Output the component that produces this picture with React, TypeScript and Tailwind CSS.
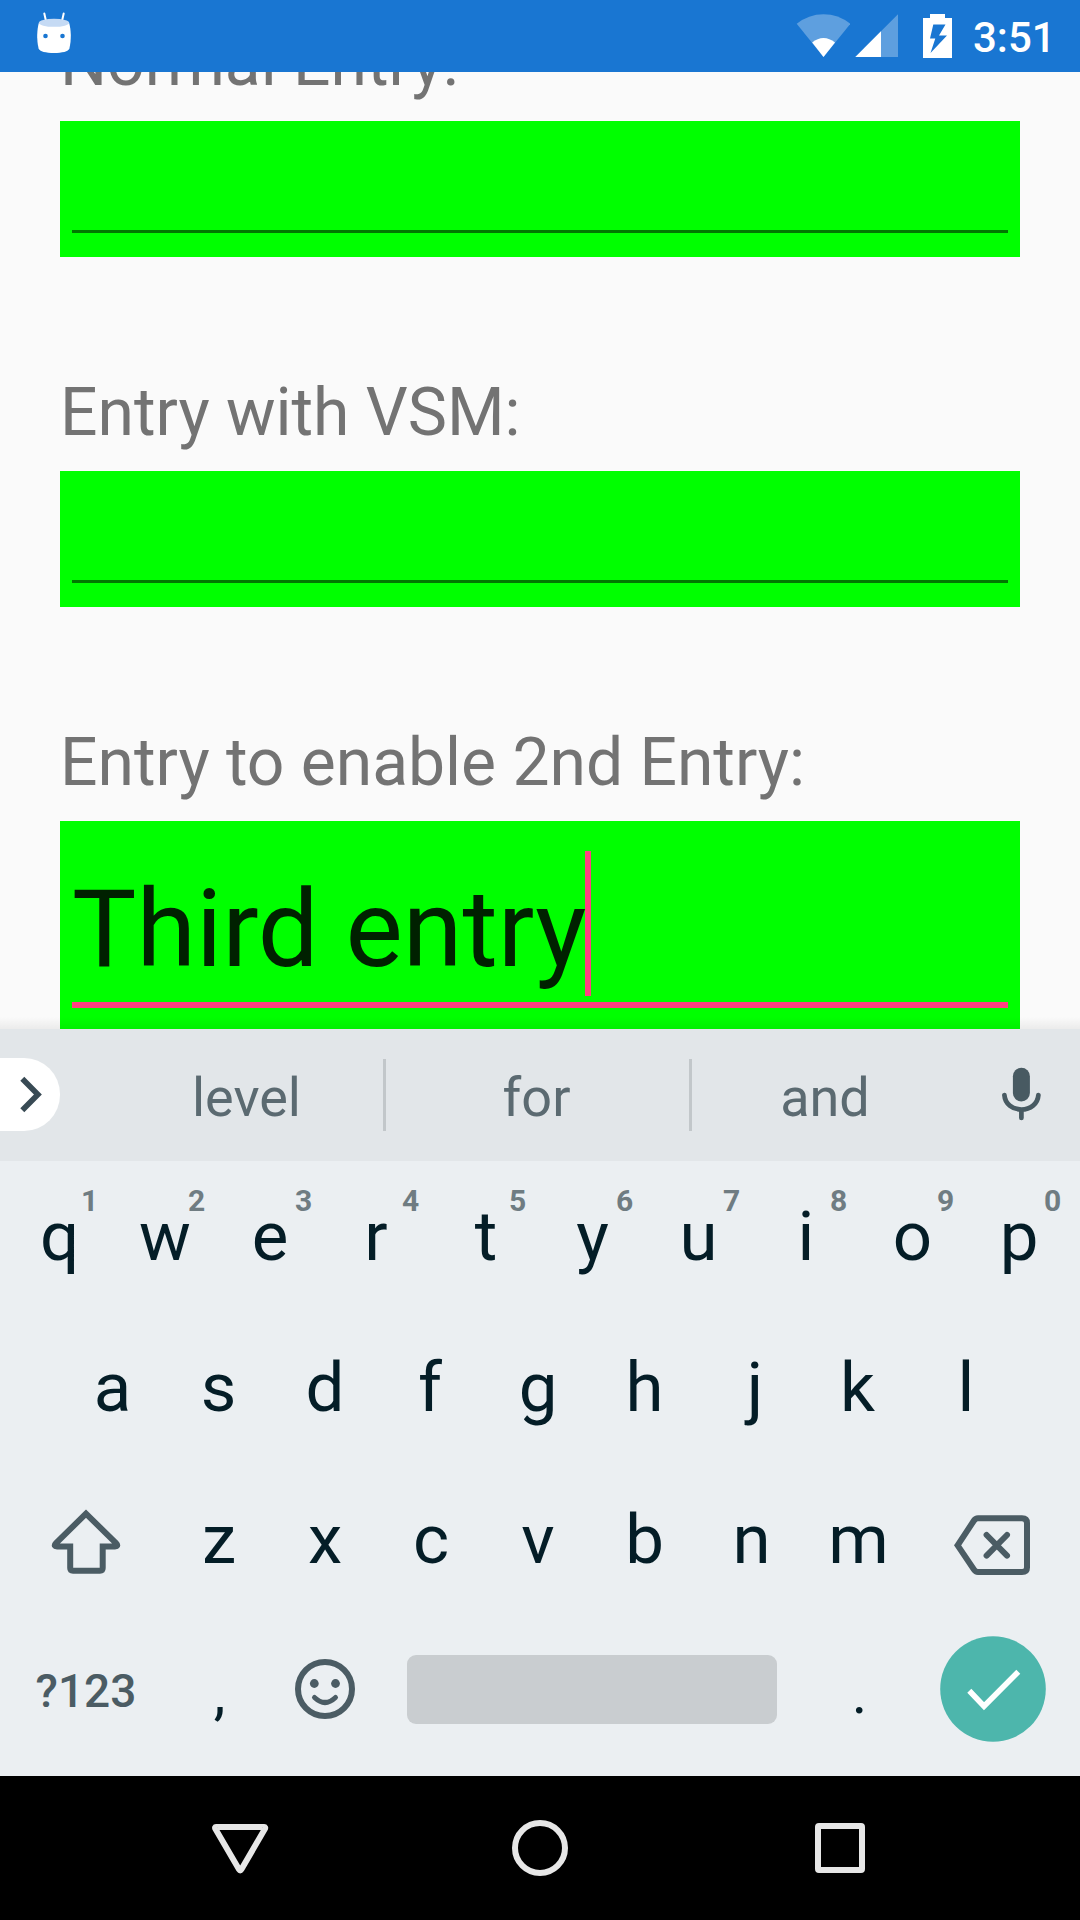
import React from "react";

const topRow = ["q", "w", "e", "r", "t", "y", "u", "i", "o", "p"];
const middleRow = ["a", "s", "d", "f", "g", "h", "j", "k", "l"];
const bottomRow = ["z", "x", "c", "v", "b", "n", "m"];

const opticalShift: Record<string, string> = {
  q: "pl-[2px]",
  w: "pr-[1px]",
  e: "pr-[5px]",
  r: "pr-[7px]",
  t: "pr-[1px]",
  y: "pr-[2px]",
  u: "pr-[4px]",
  i: "pr-[3px]",
  o: "pr-[4px]",
  p: "pr-[5px]",
  a: "pl-[1px]",
  s: "pr-[1px]",
  d: "pr-[2px]",
  f: "pr-[6px]",
  g: "pr-[4px]",
  h: "pr-[5px]",
  j: "pl-[2px]",
  k: "pr-[7px]",
  l: "pr-[4px]",
  z: "pr-[1px]",
  x: "pr-[3px]",
  c: "pr-[5px]",
  v: "pr-[5px]",
  b: "pr-[6px]",
  n: "pr-[6px]",
  m: "pr-[6px]",
};

function StatusBar() {
  return (
    <header className="relative z-10 flex h-[72px] shrink-0 items-start bg-[#1976d2] text-white">
      <svg className="ml-[36px] mt-[12px]" width="36" height="42" viewBox="36 12 36 42">
        <path d="M44.3 13.5 46 21M63.7 13.5 62 21" stroke="#fff" strokeWidth="2" strokeLinecap="round" />
        <path d="M38.8 23C37 30 36.400 39 38.600 48.500C39.500 51.500 46 53 54 53C62 53 68.500 51.500 69.400 48.500C71.600 39 71 30 69.200 23Z" fill="#fff" />
        <ellipse cx="54" cy="22.800" rx="15.200" ry="4" fill="#c5daf4" />
        <circle cx="45.500" cy="36" r="2.300" fill="#1976d2" />
        <circle cx="62.500" cy="36" r="2.300" fill="#1976d2" />
      </svg>
      <svg className="ml-[724px] mt-[13px]" width="54" height="45" viewBox="796 13 54 45">
        <path d="M823.500 57 796.700 23.800Q808.500 14.200 823.500 14.200Q838.500 14.200 850.300 23.800Z" fill="#fff" fillOpacity=".3" />
        <path d="M823.500 57 812.200 42.500Q817.500 38 823.500 38Q829.500 38 835 42.500Z" fill="#fff" />
      </svg>
      <svg className="ml-[5px] mt-[13px]" width="44" height="45" viewBox="855 13 44 45">
        <path d="M855.300 57 898 14.300V57Z" fill="#fff" fillOpacity=".3" />
        <path d="M855.300 57 881 31.300V57Z" fill="#fff" />
      </svg>
      <svg className="ml-[24px] mt-[13px]" width="29" height="46" viewBox="923 13 29 46">
        <path d="M930 14h15v4h7v40h-29V18h7zM933.300 24.500 930 38.500h5.300L930.500 53 947 35.500h-8L945.500 24.500z" fill="#fff" fillRule="evenodd" />
      </svg>
      <span className="ml-[21px] mt-[13px] text-[42px] font-medium leading-[49px]">3:51</span>
    </header>
  );
}

function Field({ label, children }: { label: string; children?: React.ReactNode }) {
  return (
    <section className="mb-[117px]">
      <div className="mb-[20px] whitespace-nowrap text-[66px] leading-[77px] tracking-[-0.03px] text-[#737373]">{label}</div>
      {children ?? (
        <div className="flex h-[136px] flex-col justify-end bg-[#00ff00] px-[12px] pb-[24px]">
          <div className="h-[3px] bg-[#007800]" />
        </div>
      )}
    </section>
  );
}

function Key({ letter, hint }: { letter: string; hint?: string }) {
  return (
    <div className="relative flex h-full w-[107px] items-center justify-center text-[69px] leading-[81px] text-[#041d27]">
      <span className={opticalShift[letter]}>{letter}</span>
      {hint && (
        <span className="absolute left-[72px] top-[25px] w-[25px] text-center text-[30px] font-bold leading-[30px] text-[#6f7c82]">
          {hint}
        </span>
      )}
    </div>
  );
}

function PunctuationKey({ mark }: { mark: string }) {
  return (
    <div className="w-[107px] pt-[7px] text-center text-[59px] leading-[69px] text-[#041d27]">{mark}</div>
  );
}

function Suggestions() {
  return (
    <div className="flex h-[132px] items-center bg-[#e2e6e9] text-[54px] leading-[64px] text-[#5b6a71]">
      <div className="mb-[1px] h-[73px] w-[60px] rounded-r-[36px] bg-white">
        <svg width="60" height="73" viewBox="0 0 60 73" fill="none">
          <path d="m22.300 20.800 15.600 15.700-15.600 15.700" stroke="#384a54" strokeWidth="5.600" />
        </svg>
      </div>
      <div className="ml-[50px] w-[273px] pt-[6px] text-center">level</div>
      <div className="h-[72px] w-[3px] bg-[#c2c7ca]" />
      <div className="w-[303px] pr-[2px] pt-[6px] text-center">for</div>
      <div className="h-[72px] w-[3px] bg-[#c2c7ca]" />
      <div className="w-[266px] pt-[6px] text-center">and</div>
      <svg className="ml-[43px]" width="42" height="56" viewBox="1001 1067 42 56" fill="none">
        <rect x="1012.900" y="1067.700" width="17" height="33.700" rx="8.500" fill="#485a62" />
        <path d="M1004.400 1095C1005 1104 1012.500 1109.500 1021.400 1109.500C1030.300 1109.500 1037.800 1104 1038.400 1095M1021.400 1110V1118" stroke="#485a62" strokeWidth="4.700" strokeLinecap="round" />
      </svg>
    </div>
  );
}

function Keyboard() {
  return (
    <div className="relative h-[747px] shrink-0 bg-[#ebeff2]">
      <div className="absolute -top-[12px] left-0 h-[12px] w-full bg-gradient-to-t from-black/6 to-transparent" />
      <Suggestions />
      <div className="flex h-[151px] justify-center">
        {topRow.map((k, i) => (
          <Key key={k} letter={k} hint={String((i + 1) % 10)} />
        ))}
      </div>
      <div className="flex h-[151px] justify-center">
        {middleRow.map((k) => (
          <Key key={k} letter={k} />
        ))}
      </div>
      <div className="flex h-[152px] items-center">
        <svg className="ml-[50px] mr-[44px] mt-[4px]" width="72" height="68" viewBox="50 1507 72 68" fill="none">
          <path d="M86 1513.600 56 1543.200C53.800 1545.400 54.800 1546.400 57 1546.400H70.200V1568Q70.200 1570.700 73 1570.700H100Q102.700 1570.700 102.700 1568V1546.400H115C117.200 1546.400 118.200 1545.400 116 1543.200Z" stroke="#4b5c64" strokeWidth="6" />
        </svg>
        {bottomRow.map((k) => (
          <Key key={k} letter={k} />
        ))}
        <svg className="ml-[37px] mt-[12px]" width="80" height="64" viewBox="952 1513 80 64" fill="none">
          <path d="M957.600 1545.300 974 1520.500Q975.500 1518.200 978 1518.200H1022Q1027 1518.200 1027 1523V1567.500Q1027 1572 1022 1572H978Q975.500 1572 974 1569.700Z" stroke="#4b5c64" strokeWidth="6" />
          <path d="m986.600 1535 20.400 20.600m0-20.600-20.400 20.600" stroke="#4b5c64" strokeWidth="6" strokeLinecap="round" />
        </svg>
      </div>
      <div className="flex h-[148px] items-center">
        <span className="w-[166px] pl-[6px] pt-[3px] text-center text-[46px] font-medium leading-[54px] text-[#4b5c64]">?123</span>
        <PunctuationKey mark="," />
        <svg className="ml-[22px]" width="60" height="60" viewBox="0 0 60 60" fill="none">
          <circle cx="30" cy="30" r="27" stroke="#4b5c64" strokeWidth="6" />
          <circle cx="19.300" cy="24.500" r="4.400" fill="#4b5c64" />
          <circle cx="40.500" cy="24.500" r="4.400" fill="#4b5c64" />
          <path d="M19.500 38.500Q30 48.500 40.500 38.500" stroke="#4b5c64" strokeWidth="5" strokeLinecap="round" />
        </svg>
        <div className="ml-[52px] mt-[1px] h-[69px] w-[370px] rounded-[9px] bg-[#c9cdd0]" />
        <div className="ml-[29px]">
          <PunctuationKey mark="." />
        </div>
        <svg className="ml-[27px]" width="106" height="106" viewBox="0 0 106 106" fill="none">
          <circle cx="53" cy="53" r="52.800" fill="#4db6ac" />
          <path d="M29.300 54.800 44 70.200 78.300 35.800" stroke="#fff" strokeWidth="5.600" />
        </svg>
      </div>
    </div>
  );
}

function NavigationBar() {
  return (
    <nav className="flex h-[144px] shrink-0 items-center justify-center gap-[240px] bg-black">
      <svg width="60" height="60" viewBox="0 0 60 60" fill="none" stroke="#e7e7e7" strokeWidth="6">
        <path d="M6 9.100H54.200Q55.700 9.100 55 10.700L31.300 51.500Q30.200 53.300 29.100 51.500L5.300 10.700Q4.600 9.100 6 9.100Z" />
      </svg>
      <svg width="60" height="60" viewBox="0 0 60 60" fill="none" stroke="#e7e7e7" strokeWidth="6">
        <circle cx="30" cy="30" r="25" />
      </svg>
      <svg width="60" height="60" viewBox="0 0 60 60" fill="none" stroke="#e7e7e7" strokeWidth="6">
        <path d="M9 8H51Q52 8 52 9V51Q52 52 51 52H9Q8 52 8 51V9Q8 8 9 8Z" />
      </svg>
    </nav>
  );
}

export default function App() {
  return (
    <div className="flex h-[1920px] w-[1080px] flex-col overflow-hidden bg-[#fafafa] font-[Roboto,sans-serif]">
      <StatusBar />
      <main className="h-[957px] shrink-0 overflow-hidden px-[60px]">
        <div className="-mt-[48px]">
          <Field label="Normal Entry:" />
          <Field label="Entry with VSM:" />
          <Field label="Entry to enable 2nd Entry:">
            <div className="h-[210px] bg-[#00ff00] px-[12px] pt-[30px]">
              <div className="flex h-[151px]">
                <span className="-mr-[1px] whitespace-nowrap pt-[15px] text-[108px] leading-[127px] text-[#002100]">Third entry</span>
                <div className="h-[145px] w-[6px] bg-[#ff4081]" />
              </div>
              <div className="h-[6px] bg-[#ff4081]" />
            </div>
          </Field>
        </div>
      </main>
      <Keyboard />
      <NavigationBar />
    </div>
  );
}
